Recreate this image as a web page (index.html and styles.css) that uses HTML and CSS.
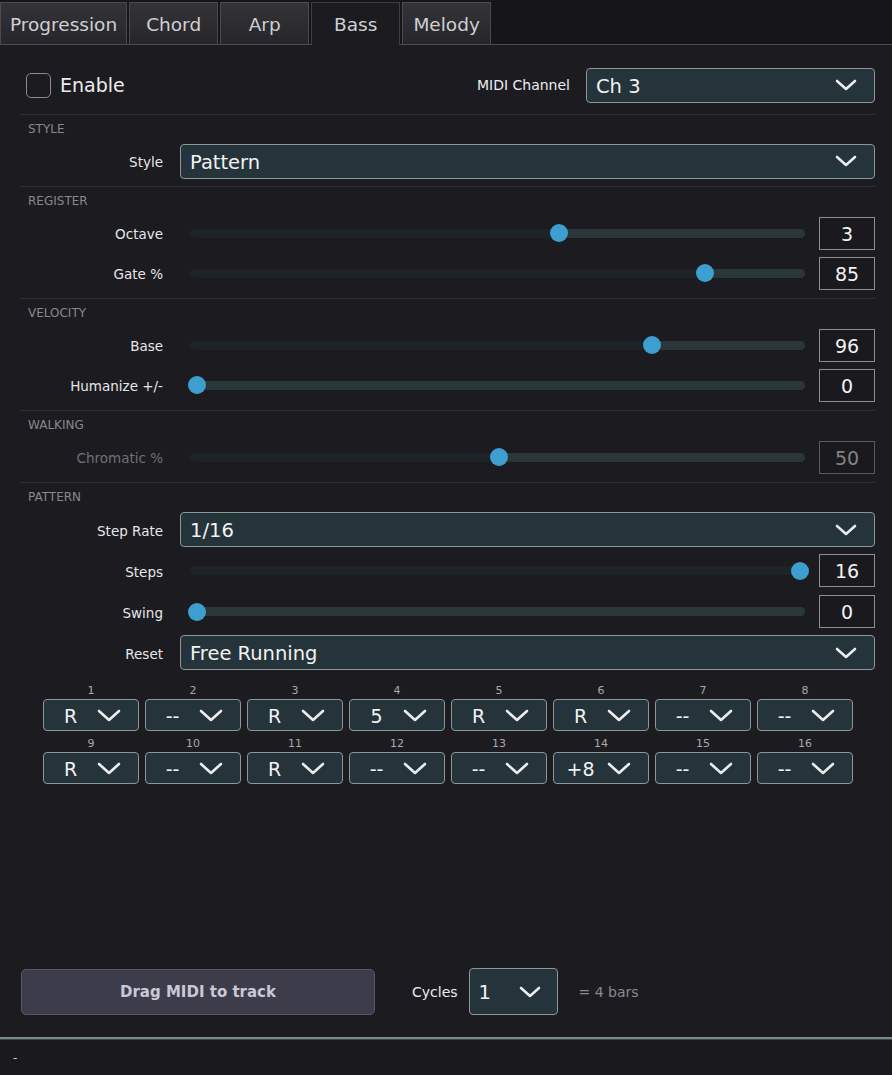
FILE: index.html
```html
<!DOCTYPE html>
<html>
<head>
    <title>Bass</title>
    <meta name="viewport" content="width=device-width, initial-scale=1">
    <link rel="stylesheet" href="styles.css">
</head>
<body>
  <div class="tabs">
    <div class="tab">Progression</div>
    <div class="tab">Chord</div>
    <div class="tab">Arp</div>
    <div class="tab active">Bass</div>
    <div class="tab">Melody</div>
  </div>

  <div class="content">
    <div class="top-row">
      <span class="check"></span>
      <span class="enable">Enable</span>
      <span class="midi-label">MIDI Channel</span>
      <div class="combo midi-combo">
        <span class="combo-text">Ch 3</span>
        <svg class="chev" width="22" height="12" viewBox="0 0 22 12"><path d="M2 2 L11 10 L20 2"/></svg>
      </div>
    </div>

    <div class="section">
      <div class="sec-title">STYLE</div>
      <div class="row">
        <label>Style</label>
        <div class="combo">
          <span class="combo-text">Pattern</span>
          <svg class="chev" width="22" height="12" viewBox="0 0 22 12"><path d="M2 2 L11 10 L20 2"/></svg>
        </div>
      </div>
    </div>

    <div class="section">
      <div class="sec-title">REGISTER</div>
      <div class="row">
        <label>Octave</label>
        <div class="slider-wrap">
          <div class="slider" style="--p:0.6"><div class="track"></div><div class="thumb"></div></div>
          <div class="value">3</div>
        </div>
      </div>
      <div class="row">
        <label>Gate %</label>
        <div class="slider-wrap">
          <div class="slider" style="--p:0.842"><div class="track"></div><div class="thumb"></div></div>
          <div class="value">85</div>
        </div>
      </div>
    </div>

    <div class="section">
      <div class="sec-title">VELOCITY</div>
      <div class="row">
        <label>Base</label>
        <div class="slider-wrap">
          <div class="slider" style="--p:0.754"><div class="track"></div><div class="thumb"></div></div>
          <div class="value">96</div>
        </div>
      </div>
      <div class="row">
        <label>Humanize +/-</label>
        <div class="slider-wrap">
          <div class="slider" style="--p:0"><div class="track"></div><div class="thumb"></div></div>
          <div class="value">0</div>
        </div>
      </div>
    </div>

    <div class="section">
      <div class="sec-title">WALKING</div>
      <div class="row disabled">
        <label>Chromatic %</label>
        <div class="slider-wrap">
          <div class="slider" style="--p:0.5"><div class="track"></div><div class="thumb"></div></div>
          <div class="value">50</div>
        </div>
      </div>
    </div>

    <div class="section pattern">
      <div class="sec-title">PATTERN</div>
      <div class="row">
        <label>Step Rate</label>
        <div class="combo">
          <span class="combo-text">1/16</span>
          <svg class="chev" width="22" height="12" viewBox="0 0 22 12"><path d="M2 2 L11 10 L20 2"/></svg>
        </div>
      </div>
      <div class="row">
        <label>Steps</label>
        <div class="slider-wrap">
          <div class="slider" style="--p:1"><div class="track"></div><div class="thumb"></div></div>
          <div class="value">16</div>
        </div>
      </div>
      <div class="row">
        <label>Swing</label>
        <div class="slider-wrap">
          <div class="slider" style="--p:0"><div class="track"></div><div class="thumb"></div></div>
          <div class="value">0</div>
        </div>
      </div>
      <div class="row">
        <label>Reset</label>
        <div class="combo">
          <span class="combo-text">Free Running</span>
          <svg class="chev" width="22" height="12" viewBox="0 0 22 12"><path d="M2 2 L11 10 L20 2"/></svg>
        </div>
      </div>

      <div class="steps" id="steps"></div>
    </div>

    <div class="bottom-row">
      <div class="drag-btn">Drag MIDI to track</div>
      <span class="cycles-label">Cycles</span>
      <div class="combo cycles-combo">
        <span class="combo-text">1</span>
        <svg class="chev" width="22" height="12" viewBox="0 0 22 12"><path d="M2 2 L11 10 L20 2"/></svg>
      </div>
      <span class="bars">= 4 bars</span>
    </div>
  </div>

  <div class="status">-</div>

  <script>
    (function(){
      var values = ['R', '--', 'R', '5', 'R', 'R', '--', '--',
                    'R', '--', 'R', '--', '--', '+8', '--', '--'];
      var stepsElement = document.getElementById('steps');

      function makeStep(index, value) {
        var cell = document.createElement('div');
        cell.className = 'step';
        cell.innerHTML =
          '<div class="step-num">' + (index + 1) + '</div>' +
          '<div class="step-box"><span class="step-text">' + value + '</span>' +
          '<svg class="chev step-chev" width="24" height="13" viewBox="0 0 24 13"><path d="M2 2 L12 11 L22 2"/></svg></div>';
        return cell;
      }

      values.forEach(function(value, i){
        stepsElement.appendChild(makeStep(i, value));
      });
    })();
  </script>
</body>
</html>
```

FILE: styles.css
```css
* {
  box-sizing: border-box;
}

body {
  margin: 0;
  height: 1075px;
  display: flex;
  flex-direction: column;
  background: #1c1c20;
  color: #ececee;
  font-family: "DejaVu Sans", Verdana, sans-serif;
  overflow: hidden;
}

/* tabs */
.tabs {
  display: flex;
  align-items: flex-end;
  height: 45px;
  background: #161618;
  border-bottom: 1px solid #4c4c52;
}

.tab {
  height: 42px;
  min-width: 89px;
  margin-right: 2px;
  padding: 1px 9px 0;
  display: flex;
  align-items: center;
  justify-content: center;
  font-size: 18.5px;
  color: #cfcfd3;
  background: linear-gradient(#343438, #26262a);
  border: 1px solid #4a4a4f;
  border-bottom: none;
}

.tab.active {
  height: 43px;
  margin-bottom: -1px;
  background: #1c1c20;
  border-color: #3e3e44;
}

/* content */
.content {
  flex: 1;
  display: flex;
  flex-direction: column;
  padding: 20px 17px 0 20px;
}

.top-row {
  display: flex;
  align-items: center;
  height: 40px;
  margin-bottom: 9px;
}

.check {
  width: 25px;
  height: 25px;
  margin-left: 6px;
  border: 1.5px solid #8a8a90;
  border-radius: 5px;
}

.enable {
  margin-left: 9px;
  font-size: 19px;
}

.midi-label {
  margin-left: auto;
  margin-right: 16px;
  font-size: 14px;
}

.midi-combo {
  width: 289px;
}

.section {
  border-top: 1px solid #2e2e34;
  padding: 6px 0 5px;
}

.sec-title {
  height: 16px;
  line-height: 16px;
  margin-bottom: 4px;
  padding-left: 8px;
  font-size: 12px;
  color: #88888d;
}

.row {
  display: grid;
  grid-template-columns: 143px 1fr;
  column-gap: 17px;
  align-items: center;
  height: 40px;
}

.pattern .row {
  height: 41px;
}

.row label {
  padding-top: 2px;
  text-align: right;
  font-size: 13.5px;
  color: #e6e6e8;
}

/* combo box */
.combo {
  display: flex;
  align-items: center;
  height: 35px;
  padding-left: 9px;
  background: #25333a;
  border: 1px solid #8d979a;
  border-radius: 4px;
}

.combo-text {
  flex: 1;
  padding-top: 2px;
  font-size: 19.5px;
  color: #f2f2f2;
}

.chev {
  margin-right: 17px;
}

.chev path {
  fill: none;
  stroke: #ececec;
  stroke-width: 2.6;
  stroke-linecap: round;
  stroke-linejoin: round;
}

/* sliders */
.slider-wrap {
  display: flex;
  align-items: center;
  margin-left: 8px;
}

.slider {
  position: relative;
  flex: 1;
  height: 18px;
  margin-right: 10px;
}

.track {
  height: 9px;
  margin: 4.5px 4px 0 2px;
  border-radius: 5px;
  background: linear-gradient(90deg, #1d2326 calc(var(--p) * 100%), #2b3638 0);
}

.thumb {
  position: absolute;
  top: 0;
  left: calc((100% - 18px) * var(--p));
  width: 18px;
  height: 18px;
  border-radius: 50%;
  background: #3d9fd0;
}

.value {
  width: 56px;
  height: 33px;
  line-height: 32px;
  text-align: center;
  font-size: 19px;
  color: #f2f2f2;
  background: #1a1a1e;
  border: 1px solid #8e8e92;
}

.disabled label {
  color: #707075;
}

.disabled .value {
  color: #838387;
  border-color: #5a5a5f;
}

/* step grid */
.steps {
  display: grid;
  grid-template-columns: repeat(8, 96px);
  column-gap: 6px;
  row-gap: 7px;
  margin: 12px 0 0 23px;
}

.step-num {
  height: 12px;
  line-height: 12px;
  margin-bottom: 2px;
  text-align: center;
  font-size: 11px;
  color: #a8a8ad;
}

.step-box {
  display: flex;
  align-items: center;
  height: 32px;
  background: #25333a;
  border: 1px solid #8d979a;
  border-radius: 4px;
}

.step-text {
  width: 53px;
  padding-top: 1px;
  text-align: center;
  font-size: 19px;
  color: #f2f2f2;
}

.step-chev {
  margin: 1px 0 0 0;
}

/* bottom */
.bottom-row {
  display: flex;
  align-items: center;
  margin-top: auto;
  margin-bottom: 22px;
}

.drag-btn {
  width: 354px;
  height: 46px;
  margin-left: 1px;
  line-height: 45px;
  text-align: center;
  font-size: 15px;
  font-weight: bold;
  color: #c9c8d6;
  background: #3d3c4a;
  border: 1px solid #57566a;
  border-radius: 5px;
}

.cycles-label {
  margin-left: 37px;
  font-size: 14px;
}

.cycles-combo {
  width: 89px;
  height: 47px;
  margin-left: 11px;
}

.cycles-combo .chev {
  margin-right: 16px;
}

.bars {
  margin-left: 21px;
  font-size: 14px;
  color: #8a8a8f;
}

.status {
  height: 38px;
  padding: 12px 0 0 13px;
  font-size: 12px;
  color: #cfcfd2;
  background: #1a1a1e;
  border-top: 2px solid #7c8989;
  box-shadow: inset 0 1px #3c4545;
}
```
